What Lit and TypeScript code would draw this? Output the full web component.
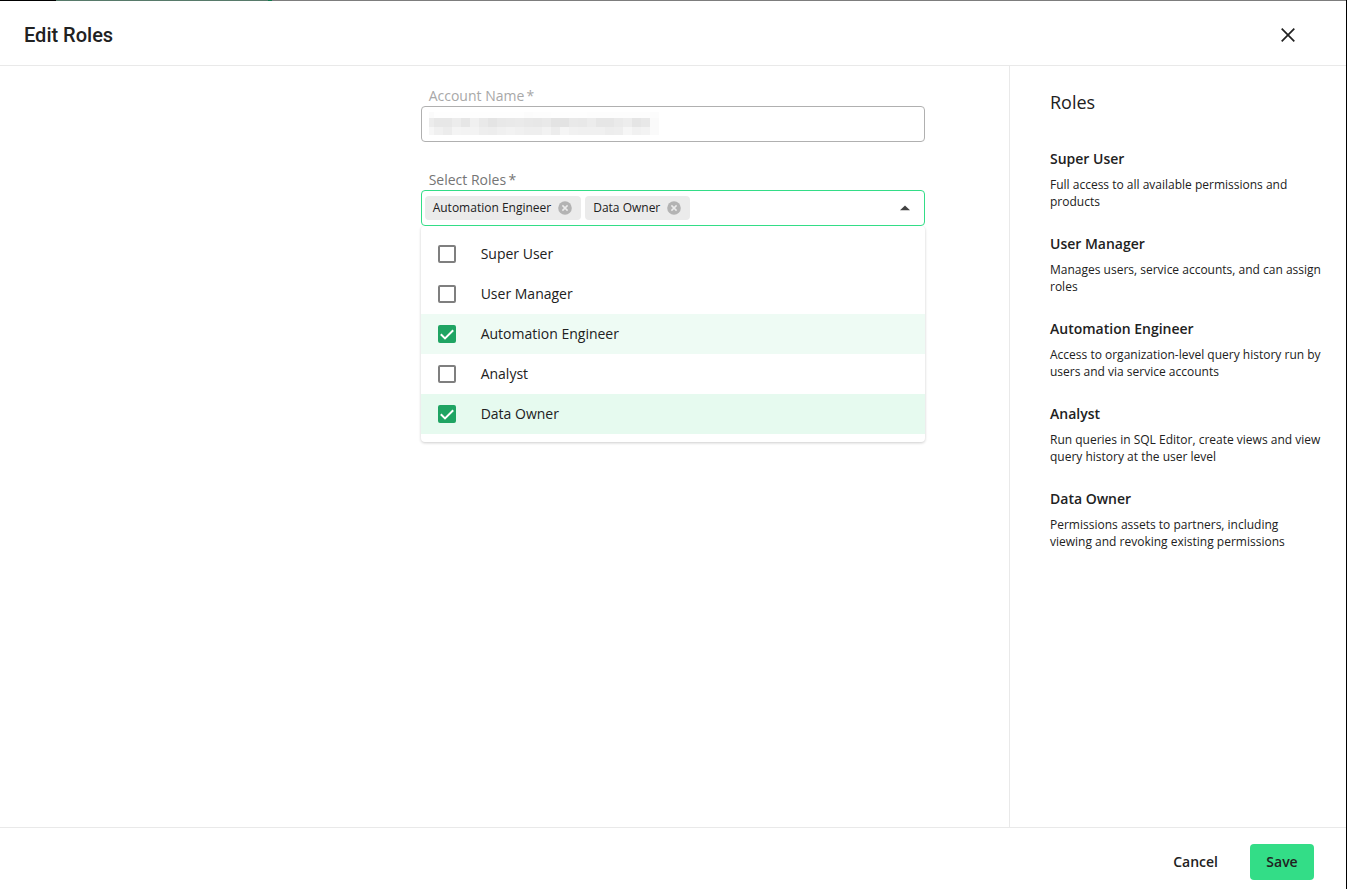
import { LitElement, html, svg, css } from "lit";
import { customElement, state } from "lit/decorators.js";
import { classMap } from "lit/directives/class-map.js";

interface Role {
  name: string;
  description: string;
}

const ROLES: Role[] = [
  { name: "Super User", description: "Full access to all available permissions and products" },
  { name: "User Manager", description: "Manages users, service accounts, and can assign roles" },
  { name: "Automation Engineer", description: "Access to organization-level query history run by users and via service accounts" },
  { name: "Analyst", description: "Run queries in SQL Editor, create views and view query history at the user level" },
  { name: "Data Owner", description: "Permissions assets to partners, including viewing and revoking existing permissions" },
];

// Grey levels of the redaction mosaic, one list per row of 9px cells.
const MOSAIC: { y: number; height: number; cells: number[] }[] = [
  { y: 0, height: 6, cells: [251, 254, 254, 254, 254, 254, 254, 254, 254, 254, 254, 252, 253, 253, 254, 254, 254, 254, 253, 253, 253, 253, 253, 253, 253, 252] },
  { y: 6, height: 9, cells: [236, 231, 231, 236, 230, 240, 233, 228, 232, 233, 234, 232, 231, 233, 227, 227, 233, 232, 236, 230, 230, 234, 237, 229, 232, 250] },
  { y: 15, height: 8, cells: [246, 240, 236, 244, 243, 243, 238, 237, 240, 242, 240, 238, 238, 242, 236, 245, 241, 240, 240, 240, 237, 238, 246, 241, 243, 250] },
];

@customElement("app-root")
export class AppRoot extends LitElement {
  static styles = css`
    :host {
      display: block;
      font-family: "Open Sans", "Noto Sans", sans-serif;
      font-size: 14px;
      line-height: 20px;
      color: #212121;
    }
    * { box-sizing: border-box; }
    .dialog {
      display: flex;
      flex-direction: column;
      min-height: 100vh;
      background: #fff;
      border-right: 1px solid #000;
    }
    .strip { display: flex; height: 1px; background: #7d7d7d; }
    .strip-dark { width: 56px; background: #000; }
    .strip-green { width: 212px; background: #577a6a; }
    .strip-accent { width: 4px; background: #0e7a4c; }
    .header {
      display: flex;
      align-items: center;
      justify-content: space-between;
      height: 65px;
      padding: 4px 46px 0 24px;
      border-bottom: 1px solid #e9e9e9;
    }
    .title { margin: 0; font: 500 20px/24px Roboto, sans-serif; }
    button { font: inherit; color: inherit; border: 0; padding: 0; background: none; cursor: pointer; }
    .close { display: flex; }
    .body { flex: 1; display: grid; grid-template-columns: 1fr 2fr 337px; }
    .form {
      grid-column: 2;
      display: flex;
      flex-direction: column;
      gap: 28px;
      width: 100%;
      max-width: 504px;
      margin: 0 auto;
      padding: 20px 0;
    }
    .field { display: flex; flex-direction: column; }
    .label { padding-left: 8px; color: #757575; }
    .label-disabled { color: #a8a8a8; }
    .box {
      position: relative;
      display: flex;
      align-items: center;
      height: 36px;
      border: 1px solid #b0b0b0;
      border-radius: 4px;
    }
    .box-open { border-color: #33dd87; gap: 4px; padding: 0 12px 0 3px; }
    .input {
      width: 100%;
      height: 100%;
      padding: 0 8px;
      border: 0;
      border-radius: 4px;
      outline: none;
      background: transparent;
      font: inherit;
    }
    .mosaic { position: absolute; left: 7px; top: 5px; }
    .chip {
      display: flex;
      align-items: center;
      gap: 7px;
      height: 24px;
      padding: 0 9px 0 8px;
      border-radius: 4px;
      background: #ebebeb;
      font-size: 12px;
    }
    .remove { display: flex; }
    .toggle { display: flex; margin-left: auto; }
    .menu {
      position: absolute;
      z-index: 1;
      top: 35px;
      left: -1px;
      right: -1px;
      padding: 8px 0;
      border-radius: 4px;
      background: #fff;
      box-shadow: 0 1px 3px rgba(0, 0, 0, 0.2);
      clip-path: inset(0 -4px -4px -4px);
    }
    .option {
      display: flex;
      align-items: center;
      gap: 25px;
      height: 40px;
      padding: 0 17px;
      cursor: pointer;
    }
    .option-selected { background: #eefbf4; }
    .option-active { background: #e6faef; }
    .check {
      appearance: none;
      width: 18px;
      height: 18px;
      margin: 0;
      border: 2px solid #7f7f7f;
      border-radius: 2px;
      background: #fff;
    }
    .check:checked {
      border-color: #1fa463;
      background: #1fa463 url("data:image/svg+xml,%3Csvg xmlns='http://www.w3.org/2000/svg' viewBox='0 0 14 14'%3E%3Cpath d='M.8 7.2 5 11.4 13.2 3.2' fill='none' stroke='white' stroke-width='2'/%3E%3C/svg%3E") center / 14px no-repeat;
    }
    .aside {
      padding: 24px 24px 24px 40px;
      border-left: 1px solid #e9e9e9;
    }
    .aside-title { margin: 0 0 34px; font-size: 18px; line-height: 25px; font-weight: 400; }
    .roles { display: flex; flex-direction: column; gap: 24px; margin: 0; }
    .role-name { padding-bottom: 7px; font-weight: 600; }
    .role-text { margin: 0; font-size: 12px; line-height: 17px; }
    .footer {
      display: flex;
      justify-content: flex-end;
      gap: 16px;
      padding: 16px 32px 9px;
      border-top: 1px solid #e9e9e9;
    }
    .button { min-width: 64px; height: 36px; padding: 0 16px; border-radius: 4px; font-weight: 600; }
    .button-primary { background: #33dd87; }
  `;

  @state() private selected = new Set(["Automation Engineer", "Data Owner"]);
  @state() private open = true;

  private toggleRole(name: string) {
    const next = new Set(this.selected);
    if (!next.delete(name)) next.add(name);
    this.selected = next;
  }

  private renderMosaic() {
    return html`<svg class="mosaic" width="230" height="23" shape-rendering="crispEdges" aria-hidden="true">
      ${MOSAIC.map((row) =>
        row.cells.map((v, i) => svg`<rect x=${i * 9 - 4} y=${row.y} width="9" height=${row.height} fill="rgb(${v},${v},${v})"></rect>`)
      )}
    </svg>`;
  }

  private renderChip(role: Role) {
    return html`<span class="chip">
      ${role.name}
      <button class="remove" type="button" aria-label="Remove ${role.name}" @click=${() => this.toggleRole(role.name)}>
        <svg width="14" height="14" viewBox="0 0 14 14">
          <circle cx="7" cy="7" r="6.8" fill="#b3b3b3"></circle>
          <path d="M4.4 4.4 9.6 9.6M9.6 4.4 4.4 9.6" stroke="#ebebeb" stroke-width="1.5"></path>
        </svg>
      </button>
    </span>`;
  }

  private renderOption(role: Role) {
    const on = this.selected.has(role.name);
    const active = on && role.name === "Data Owner";
    return html`<label class=${classMap({ option: true, "option-selected": on, "option-active": active })}>
      <input class="check" type="checkbox" .checked=${on} @change=${() => this.toggleRole(role.name)} />
      ${role.name}
    </label>`;
  }

  render() {
    return html`<div class="dialog" role="dialog" aria-labelledby="title">
      <div class="strip">
        <span class="strip-dark"></span><span class="strip-green"></span><span class="strip-accent"></span>
      </div>
      <header class="header">
        <h1 class="title" id="title">Edit Roles</h1>
        <button class="close" aria-label="Close">
          <svg width="24" height="24" viewBox="0 0 24 24">
            <path d="M5.7 5.7 18.3 18.3M18.3 5.7 5.7 18.3" stroke="#212121" stroke-width="1.7"></path>
          </svg>
        </button>
      </header>
      <main class="body">
        <form class="form">
          <div class="field">
            <label class="label label-disabled" for="account">Account Name&thinsp;*</label>
            <div class="box">
              <input class="input" id="account" type="text" disabled />
              ${this.renderMosaic()}
            </div>
          </div>
          <div class="field">
            <span class="label" id="roles-label">Select Roles&thinsp;*</span>
            <div class="box box-open" role="group" aria-labelledby="roles-label">
              ${ROLES.filter((r) => this.selected.has(r.name)).map((r) => this.renderChip(r))}
              <button class="toggle" type="button" aria-label="Toggle roles" aria-expanded=${this.open} @click=${() => (this.open = !this.open)}>
                <svg width="14" height="14" viewBox="0 0 14 14"><path d="M2 9.2 7 4.4 12 9.2Z" fill="#424242"></path></svg>
              </button>
              ${this.open ? html`<div class="menu">${ROLES.map((r) => this.renderOption(r))}</div>` : null}
            </div>
          </div>
        </form>
        <aside class="aside">
          <h2 class="aside-title">Roles</h2>
          <dl class="roles">
            ${ROLES.map((r) => html`<div><dt class="role-name">${r.name}</dt><dd class="role-text">${r.description}</dd></div>`)}
          </dl>
        </aside>
      </main>
      <footer class="footer">
        <button class="button">Cancel</button>
        <button class="button button-primary">Save</button>
      </footer>
    </div>`;
  }
}
